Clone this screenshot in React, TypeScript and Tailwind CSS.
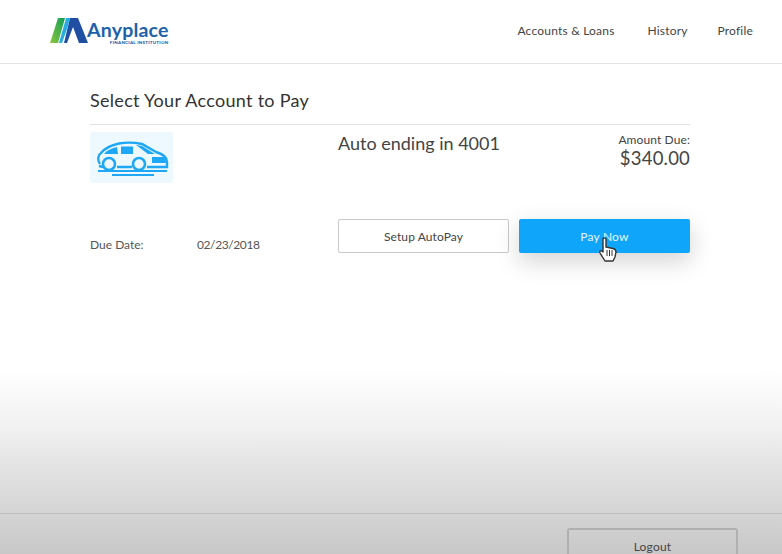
import React from "react";

function Logo() {
  return (
    <svg width="38" height="27" viewBox="0 0 38 27">
      <defs>
        <linearGradient id="g" x1="0" y1="1" x2="1" y2="0">
          <stop offset="0" stopColor="#8cc63f" />
          <stop offset="1" stopColor="#0f9d58" />
        </linearGradient>
      </defs>
      <polygon points="8,1 15,1 8,26 0,26" fill="url(#g)" />
      <polygon points="16,1 20,1 17,12 12,26 9,26" fill="#29abe2" />
      <polygon points="20,1 28,1 38,26 29,26 23,10 17,26 14,26" fill="#1f4fa3" />
    </svg>
  );
}

function Car() {
  return (
    <svg width="74" height="40" viewBox="0 0 74 40" fill="none" stroke="#1ea7f5" strokeWidth="2.4">
      <path d="M5 26 C2 22 3 17 6 15 C10 10 17 7 24 5.5 C32 4 40 4.5 47 6 L61 14 C68 16 72 19 72 24 L72 29 L52 29 M37 29 L22 29 M8 29 L4 28" />
      <path d="M9 16 C12 12 17 10 22 9 L23 16 Z" fill="#1ea7f5" stroke="none" />
      <path d="M26 8.5 L38 8.5 L38 16 L26 16 Z" fill="#1ea7f5" stroke="none" />
      <path d="M41 7 L47 8 L60 16 L53 16 Z" fill="#1ea7f5" stroke="none" />
      <path d="M57 19 L70 19 L71 25 L57 25 Z" fill="#1ea7f5" stroke="none" />
      <circle cx="14" cy="26" r="6" fill="#eef8ff" strokeWidth="2.6" />
      <circle cx="44" cy="26" r="6" fill="#eef8ff" strokeWidth="2.6" />
      <path d="M3 33 L72 33 M17 37 L59 37" strokeWidth="2" />
    </svg>
  );
}

function Cursor() {
  return (
    <svg width="20" height="25" viewBox="0 0 20 25" className="absolute left-[79px] top-[18px]">
      <path
        d="M5 2 C5 0.5 8 0.5 8 2 L8 10 L15 11.5 C17 12 18 13 18 15 L17 20 L15 24 L7 24 L2 16 C1 14 3 13 5 15 Z"
        fill="#fff"
        stroke="#333"
        strokeWidth="1.4"
        strokeLinejoin="round"
      />
      <path d="M9 13 L9 19 M11.5 13 L11.5 19 M14 13 L14 19" stroke="#333" strokeWidth="1" />
    </svg>
  );
}

export default function App() {
  return (
    <div className="flex h-[554px] w-[782px] flex-col overflow-hidden bg-[linear-gradient(to_bottom,#ffffff_0px,#ffffff_370px,#f0f0f0_430px,#d8d8d8_500px,#c8c8c8_554px)] font-['Lato','Liberation_Sans',sans-serif] text-[#444]">
      <header className="flex h-[64px] shrink-0 items-center border-b border-[#e2e2e2] bg-white pl-[50px] pr-[29px] pb-[2px]">
        <div className="flex items-center">
          <Logo />
          <div className="ml-[-1px] flex flex-col pt-[3px]">
            <span className="text-[19.5px] font-bold leading-[20px] tracking-[0.2px] text-[#1c62ab]">Anyplace</span>
            <span className="text-right text-[4.5px] font-black leading-[5px] tracking-[0.25px] text-[#1c62ab]">FINANCIAL INSTITUTION</span>
          </div>
        </div>
        <nav className="ml-auto flex text-[12px] tracking-[0.2px]">
          <span className="mr-[32px] w-[98px]">Accounts &amp; Loans</span>
          <span className="mr-[32px] w-[38px]">History</span>
          <span>Profile</span>
        </nav>
      </header>

      <main className="flex-1 pl-[90px] pr-[92px]">
        <h1 className="mt-[24px] text-[18px] leading-[24px] tracking-[0.3px] text-[#333]">Select Your Account to Pay</h1>
        <div className="mt-[12px] h-[1px] bg-[#e0e0e0]" />
        <div className="mt-[7px] flex items-start">
          <div className="flex h-[51px] w-[83px] items-center justify-center rounded-[3px] bg-[#eef8ff]">
            <Car />
          </div>
          <div className="ml-[165px] text-[18px] leading-[22px]">Auto ending in 4001</div>
          <div className="ml-auto text-right">
            <div className="mt-[1px] text-[12px] leading-[14px] tracking-[0.1px]">Amount Due:</div>
            <div className="text-[18.5px] leading-[22px] tracking-[0.2px]">$340.00</div>
          </div>
        </div>
        <div className="mt-[35px] flex items-center">
          <span className="w-[107px] pt-[18px] text-[12px] text-[#555]">Due Date:</span>
          <span className="w-[141px] pt-[18px] text-[12px] tracking-[-0.4px] text-[#555]">02/23/2018</span>
          <button className="h-[34px] w-[171px] rounded-[2px] border border-[#c9c9c9] bg-white pt-[2px] text-[12px] tracking-[0.1px] text-[#444]">Setup AutoPay</button>
          <button className="relative ml-[10px] h-[34px] w-[171px] rounded-[2px] bg-[#0fa5fb] pt-[2px] text-[12px] tracking-[0.2px] text-[#e6f6ff] shadow-[0_8px_24px_rgba(0,0,0,0.18)]">
            Pay Now
            <Cursor />
          </button>
        </div>
      </main>

      <footer className="flex h-[41px] shrink-0 justify-end border-t border-[#bdbdbd] pr-[44px] pt-[14px]">
        <button className="h-[40px] w-[171px] rounded-t-[3px] border-2 border-[#b0b0b0] pb-[3px] text-[12px] tracking-[0.2px] text-[#444]">Logout</button>
      </footer>
    </div>
  );
}
